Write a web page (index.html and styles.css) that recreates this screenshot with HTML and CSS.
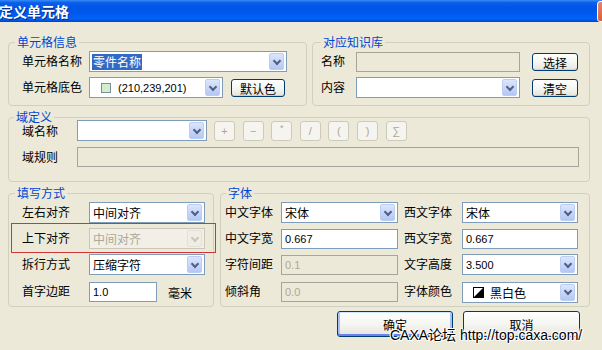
FILE: index.html
```html
<!DOCTYPE html>
<html lang="zh-CN">
<head>
  <meta charset="UTF-8" />
  <meta name="viewport" content="width=device-width, initial-scale=1.0"/>
  <title>定义单元格</title>
  <link rel="stylesheet" href="styles.css">
</head>
<body>
  <div class="dialog">
    <div class="titlebar">
      <span class="title">定义单元格</span>
      <span class="close"></span>
    </div>

    <div class="client">
      <div class="pair">
        <div class="group cell-group">
          <span class="legend">单元格信息</span>
          <div class="line">
            <span class="lbl">单元格名称</span>
            <div class="combo w-name"><span class="value"><span class="sel">零件名称</span></span><span class="arrow"></span></div>
          </div>
          <div class="line">
            <span class="lbl">单元格底色</span>
            <div class="combo w-color"><span class="value num"><span class="swatch"></span>(210,239,201)</span><span class="arrow"></span></div>
            <button class="btn btn-default-color">默认色</button>
          </div>
        </div>

        <div class="group kb-group">
          <span class="legend">对应知识库</span>
          <div class="line">
            <span class="lbl">名称</span>
            <div class="edit off w-kb"></div>
            <button class="btn btn-side">选择</button>
          </div>
          <div class="line">
            <span class="lbl">内容</span>
            <div class="combo w-kb"><span class="value"></span><span class="arrow"></span></div>
            <button class="btn btn-side">清空</button>
          </div>
        </div>
      </div>

      <div class="group field-group">
        <span class="legend">域定义</span>
        <div class="line">
          <span class="lbl">域名称</span>
          <div class="combo w-field"><span class="value"></span><span class="arrow"></span></div>
          <div class="tools">
            <button class="tool">+</button>
            <button class="tool">−</button>
            <button class="tool star">*</button>
            <button class="tool">/</button>
            <button class="tool">(</button>
            <button class="tool">)</button>
            <button class="tool">∑</button>
          </div>
        </div>
        <div class="line">
          <span class="lbl">域规则</span>
          <div class="edit off w-rule"></div>
        </div>
      </div>

      <div class="pair pair-low">
        <div class="group fill-group">
          <span class="legend">填写方式</span>
          <div class="line">
            <span class="lbl">左右对齐</span>
            <div class="combo w-fill"><span class="value">中间对齐</span><span class="arrow"></span></div>
          </div>
          <div class="line">
            <span class="lbl">上下对齐</span>
            <div class="combo off w-fill"><span class="value">中间对齐</span><span class="arrow"></span></div>
          </div>
          <div class="line">
            <span class="lbl">拆行方式</span>
            <div class="combo w-fill"><span class="value">压缩字符</span><span class="arrow"></span></div>
          </div>
          <div class="line line-last">
            <span class="lbl">首字边距</span>
            <div class="edit num w-margin">1.0</div>
            <span class="unit">毫米</span>
          </div>
          <div class="mark"></div>
        </div>

        <div class="group font-group">
          <span class="legend">字体</span>
          <div class="line">
            <span class="lbl">中文字体</span>
            <div class="combo w-font"><span class="value">宋体</span><span class="arrow"></span></div>
            <span class="lbl lbl-2">西文字体</span>
            <div class="combo w-font2"><span class="value">宋体</span><span class="arrow"></span></div>
          </div>
          <div class="line">
            <span class="lbl">中文字宽</span>
            <div class="edit num w-font">0.667</div>
            <span class="lbl lbl-2">西文字宽</span>
            <div class="edit num w-font2">0.667</div>
          </div>
          <div class="line">
            <span class="lbl">字符间距</span>
            <div class="edit off num w-font">0.1</div>
            <span class="lbl lbl-2">文字高度</span>
            <div class="combo w-font2"><span class="value num">3.500</span><span class="arrow"></span></div>
          </div>
          <div class="line line-last">
            <span class="lbl">倾斜角</span>
            <div class="edit off num w-font">0.0</div>
            <span class="lbl lbl-2">字体颜色</span>
            <div class="combo w-font2">
              <span class="value">
                <svg class="bw" width="11" height="11" viewBox="0 0 11 11"><rect x="0.5" y="0.5" width="10" height="10" fill="#fff" stroke="#000"/><polygon points="11,0 11,11 0,11" fill="#000"/></svg>黑白色
              </span>
              <span class="arrow"></span>
            </div>
          </div>
        </div>
      </div>

      <div class="actions">
        <button class="btn btn-big btn-ok">确定</button>
        <button class="btn btn-big btn-cancel">取消</button>
      </div>
    </div>

    <div class="watermark">CAXA论坛 http://top.caxa.com/</div>
  </div>
</body>
</html>
```

FILE: styles.css
```css
* {
  box-sizing: border-box;
}

html, body {
  margin: 0;
}

body {
  width: 602px;
  height: 350px;
  overflow: hidden;
  background: #ECE9D8;
  font-family: "Liberation Sans", "Noto Sans CJK SC", sans-serif;
  font-size: 12px;
  color: #000;
}

.dialog {
  position: relative;
  height: 350px;
}

/* title bar */
.titlebar {
  height: 22px;
  display: flex;
  align-items: center;
  background: linear-gradient(to bottom, #3A8CF8 0%, #0A5FEA 12%, #0055E5 35%, #0058EE 60%, #0062F7 85%, #0050DE 95%, #0041C9 100%);
}

.title {
  color: #fff;
  font-family: "Noto Sans CJK SC", sans-serif;
  font-weight: bold;
  font-size: 14px;
  line-height: 22px;
  margin-left: -1px;
  text-shadow: 1px 1px 0 #0A2A8A;
}

.close {
  margin-left: auto;
  margin-right: -16px;
  width: 21px;
  height: 21px;
  border: 1px solid #fff;
  border-radius: 3px;
  background: linear-gradient(135deg, #EC8A6A, #C9401F);
}

/* client area */
.client {
  padding: 20px 12px 0 8px;
}

.pair {
  display: flex;
  gap: 5px;
}

.pair-low {
  gap: 6px;
  margin-top: 11px;
}

.group {
  position: relative;
  border: 1px solid #D0D0BF;
  border-radius: 4px;
  display: flex;
  flex-direction: column;
  gap: 5px;
}

.legend {
  position: absolute;
  top: -6px;
  left: 6px;
  padding: 0 2px;
  background: #ECE9D8;
  color: #0046D5;
  line-height: 12px;
}

.line {
  display: flex;
  align-items: center;
  height: 21px;
}

.lbl {
  flex: none;
  line-height: 12px;
  white-space: nowrap;
}

.num {
  font-size: 11px;
}

/* combo box */
.combo {
  flex: none;
  display: flex;
  height: 21px;
  padding: 1px;
  border: 1px solid #7F9DB9;
  background: #fff;
}

.combo .value {
  flex: 1;
  display: flex;
  align-items: center;
  padding-left: 2px;
  white-space: nowrap;
  overflow: hidden;
  font-family: "Noto Sans CJK SC", "Liberation Sans", sans-serif;
}

.combo .value.num {
  font-family: "Liberation Sans", sans-serif;
}

.combo .arrow {
  flex: none;
  width: 15px;
  margin-right: 1px;
  border: 1px solid #BCCDF4;
  border-radius: 2px;
  background: linear-gradient(#DCE6FC, #B4C7F4);
  display: flex;
  align-items: center;
  justify-content: center;
}

.combo .arrow::after {
  content: "";
  width: 4px;
  height: 4px;
  border-right: 2px solid #4D6185;
  border-bottom: 2px solid #4D6185;
  transform: translateY(-1px) rotate(45deg);
}

.combo.off {
  border-color: #CBC7B8;
  background: #F2F0E6;
  color: #ACA899;
}

.combo.off .arrow {
  border-color: #E4E1D6;
  background: #EFEDE4;
}

.combo.off .arrow::after {
  border-color: #CBC7B8;
}

.sel {
  background: #316AC5;
  color: #fff;
  padding: 0 1px;
  line-height: 16px;
  margin-left: -1px;
}

.swatch {
  width: 10px;
  height: 10px;
  margin: 0 7px 0 8px;
  border: 1px solid #7D8C9A;
  background: rgb(210, 239, 201);
}

.bw {
  margin: 0 6px 0 7px;
}

/* edit box */
.edit {
  flex: none;
  height: 20px;
  display: flex;
  align-items: center;
  padding: 0 3px;
  border: 1px solid #7F9DB9;
  background: #fff;
}

.edit.off {
  border-color: #A5A59C;
  background: #ECE9D8;
  color: #ACA899;
}

/* buttons */
.btn {
  flex: none;
  padding: 0;
  font-family: "Noto Sans CJK SC", sans-serif;
  font-size: 12px;
  color: #000;
  border: 1px solid #003C74;
  border-radius: 3px;
  background: linear-gradient(#FFFFFF, #F4F4F0 55%, #E6E3DA);
  box-shadow: inset 0 -1px #D6D0C5;
}

.tool {
  flex: none;
  width: 21px;
  height: 20px;
  padding: 0;
  font-family: "Liberation Sans", sans-serif;
  font-size: 11px;
  color: #ACA899;
  border: 1px solid #CDCAB9;
  border-radius: 3px;
  background: #F5F4EE;
}

.tool.star {
  font-size: 9px;
  padding-bottom: 5px;
}

/* group 1 */
.cell-group {
  width: 299px;
  padding: 8px 0 7px 13px;
}

.cell-group .lbl {
  width: 67px;
}

.w-name {
  width: 198px;
}

.w-color {
  width: 134px;
}

.btn-default-color {
  width: 54px;
  height: 18px;
  margin-left: 8px;
}

.kb-group {
  flex: 1;
  padding: 8px 0 7px 8px;
}

.kb-group .legend {
  left: 8px;
}

.kb-group .lbl {
  width: 35px;
}

.w-kb {
  width: 164px;
}

.btn-side {
  width: 46px;
  height: 18px;
  margin-left: 12px;
}

/* group 2 */
.field-group {
  margin-top: 11px;
  padding: 2px 10px 14px 13px;
}

.field-group .legend {
  left: 5px;
}

.field-group .lbl {
  width: 55px;
  padding-top: 3px;
}

.w-field {
  width: 130px;
}

.tools {
  display: flex;
  gap: 7.6px;
  margin-left: 7px;
}

.w-rule {
  width: 502px;
}

/* group 3 */
.fill-group {
  width: 206px;
  padding: 8px 0 4px 13px;
}

.fill-group .lbl {
  width: 67px;
}

.w-fill {
  width: 116px;
}

.line-last {
  margin-top: 2px;
  height: 20px;
}

.w-margin {
  width: 68px;
}

.unit {
  margin-left: 11px;
}

.mark {
  position: absolute;
  left: 2px;
  top: 29px;
  width: 205px;
  height: 30px;
  border: 1px solid #D03636;
}

.font-group {
  flex: 1;
  padding: 8px 0 4px 4px;
}

.font-group .legend {
  left: 5px;
}

.font-group .lbl {
  width: 56px;
}

.font-group .lbl-2 {
  width: 58px;
  margin-left: 6px;
}

.w-font {
  width: 117px;
}

.w-font2 {
  width: 116px;
}

/* bottom buttons */
.actions {
  display: flex;
  justify-content: flex-end;
  gap: 10px;
  margin-top: 4px;
  padding-right: 10px;
}

.btn-big {
  height: 26px;
}

.btn-ok {
  width: 116px;
  box-shadow: inset 0 1px #CEE7FF, inset 0 -2px #6982EE, inset 2px 0 #A8C0F4, inset -2px 0 #A8C0F4;
}

.btn-cancel {
  width: 117px;
}

.watermark {
  position: absolute;
  left: 390px;
  top: 327px;
  font-size: 14px;
  line-height: 16px;
  white-space: nowrap;
  color: #000;
  text-shadow: 1px 0 #fff, -1px 0 #fff, 0 1px #fff, 0 -1px #fff, 1px 1px #fff, -1px -1px #fff;
}
```
